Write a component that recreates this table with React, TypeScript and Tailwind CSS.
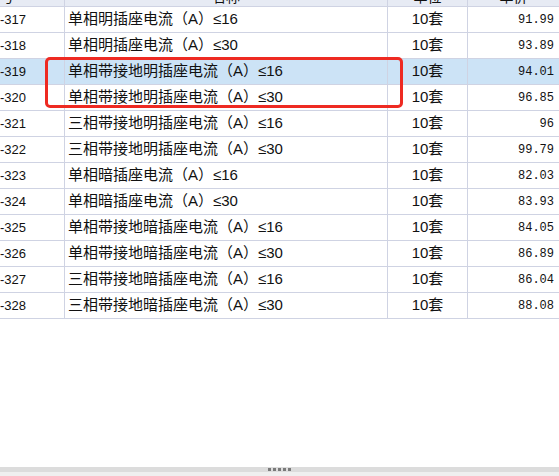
import React from 'react';

type Row = { code: string; name: string; unit: string; price: string };

const rows: Row[] = [
  { code: '-317', name: '单相明插座电流（A）≤16', unit: '10套', price: '91.99' },
  { code: '-318', name: '单相明插座电流（A）≤30', unit: '10套', price: '93.89' },
  { code: '-319', name: '单相带接地明插座电流（A）≤16', unit: '10套', price: '94.01' },
  { code: '-320', name: '单相带接地明插座电流（A）≤30', unit: '10套', price: '96.85' },
  { code: '-321', name: '三相带接地明插座电流（A）≤16', unit: '10套', price: '96' },
  { code: '-322', name: '三相带接地明插座电流（A）≤30', unit: '10套', price: '99.79' },
  { code: '-323', name: '单相暗插座电流（A）≤16', unit: '10套', price: '82.03' },
  { code: '-324', name: '单相暗插座电流（A）≤30', unit: '10套', price: '83.93' },
  { code: '-325', name: '单相带接地暗插座电流（A）≤16', unit: '10套', price: '84.05' },
  { code: '-326', name: '单相带接地暗插座电流（A）≤30', unit: '10套', price: '86.89' },
  { code: '-327', name: '三相带接地暗插座电流（A）≤16', unit: '10套', price: '86.04' },
  { code: '-328', name: '三相带接地暗插座电流（A）≤30', unit: '10套', price: '88.08' },
];

const cjk = "font-['Liberation_Sans','Noto_Sans_CJK_SC',sans-serif]";

export default function App() {
  return (
    <div className="relative flex h-[476px] w-[559px] flex-col overflow-hidden bg-white text-[#111]">
      {/* header, scrolled mostly out of view */}
      <div className={`flex h-[7px] overflow-hidden border-b border-[#cfd3e3] bg-[#e7ebf4] text-[14px] ${cjk}`}>
        <div className="w-[65px] shrink-0 border-r border-[#cfd3e3] leading-[18px] -mt-[12px] pl-0">号</div>
        <div className="w-[323px] shrink-0 border-r border-[#cfd3e3] text-center leading-[18px] -mt-[12px]">名称</div>
        <div className="w-[80px] shrink-0 border-r border-[#cfd3e3] text-center leading-[18px] -mt-[12px]">单位</div>
        <div className="flex-1 text-center leading-[18px] -mt-[12px]">单价</div>
      </div>

      {rows.map((r, i) => (
        <div
          key={r.code}
          className={`flex h-[26px] items-stretch border-b border-[#cfd3e3] ${i === 2 ? 'bg-[#cce3f6]' : 'bg-white'}`}
        >
          <div className="flex w-[65px] shrink-0 items-center border-r border-[#cfd3e3] font-['Liberation_Sans',sans-serif] text-[13px]">
            {r.code}
          </div>
          <div className={`flex w-[323px] shrink-0 items-center border-r border-[#cfd3e3] pl-[3px] text-[15px] ${cjk}`}>
            {r.name}
          </div>
          <div className={`flex w-[80px] shrink-0 items-center justify-center border-r border-[#cfd3e3] text-[15px] ${cjk}`}>
            {r.unit}
          </div>
          <div className="flex flex-1 items-center justify-end pr-[5px] font-['Liberation_Mono',monospace] text-[12px]">
            {r.price}
          </div>
        </div>
      ))}

      <div className="flex-1 bg-white" />

      {/* splitter */}
      <div className="flex h-[5px] items-center justify-center gap-[2px] bg-[#dcdcdc]">
        {[0, 1, 2, 3, 4].map((d) => (
          <span key={d} className="h-[3px] w-[3px] bg-[#7a7a7a]" />
        ))}
      </div>
      <div className="h-[4px] bg-[#efefef]" />

      {/* red highlight box */}
      <div className="absolute left-[45px] top-[57px] h-[51px] w-[358px] rounded-[5px] border-[3px] border-[#ee2a22]" />
    </div>
  );
}
